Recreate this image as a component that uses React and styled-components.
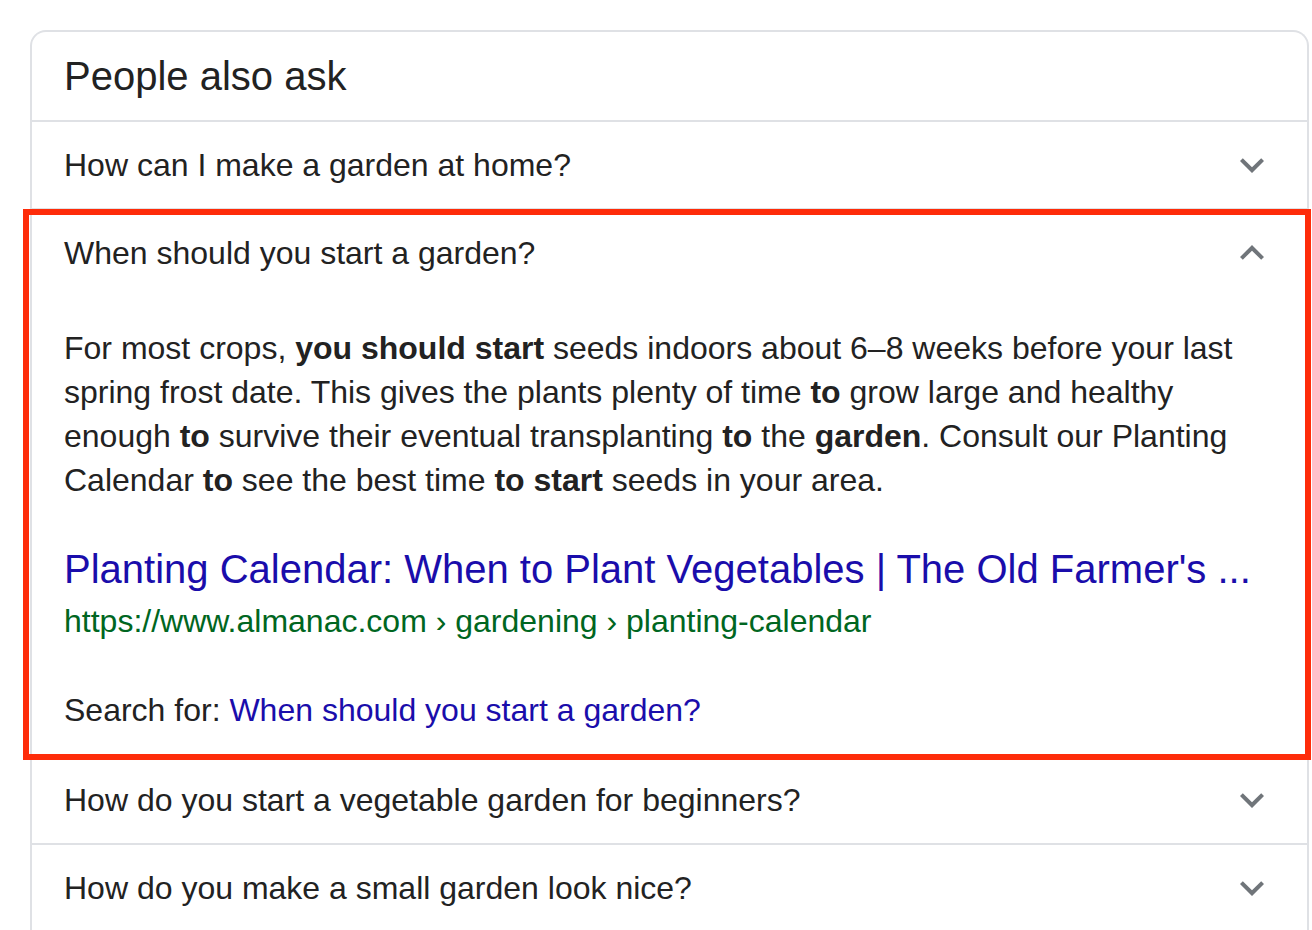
import React from "react";
import styled, { createGlobalStyle, css } from "styled-components";

const Global = createGlobalStyle`
  html, body { margin: 0; padding: 0; background: #fff; }
  body { font-family: "Liberation Sans", Arial, sans-serif; color: #222; }
`;

const Page = styled.div`
  padding: 30px 0 0 30px;
`;

const Card = styled.div`
  width: 1279px;
  box-sizing: border-box;
  border: 2px solid #dfe1e5;
  border-bottom: none;
  border-radius: 16px 16px 0 0;
  background: #fff;
`;

const Heading = styled.div`
  padding: 20px 32px 20px;
  font-size: 40px;
  line-height: 48px;
  color: #222;
`;

const Item = styled.div`
  position: relative;
  border-top: 2px solid #dfe1e5;
  ${(p) =>
    p.$highlight &&
    css`
      &::after {
        content: "";
        position: absolute;
        top: -1px;
        left: -9px;
        right: -4px;
        bottom: -5px;
        border: 6px solid #fe2c0a;
        pointer-events: none;
        z-index: 1;
      }
    `}
`;

const Question = styled.div`
  display: flex;
  align-items: center;
  justify-content: space-between;
  min-height: 86px;
  padding: 0 31px 0 32px;
  font-size: 32px;
  line-height: 40px;
  color: #222;
`;

const Chevron = styled.svg`
  width: 48px;
  height: 48px;
  fill: #70757a;
  flex: none;
`;

const Answer = styled.div`
  padding: 30px 32px 23px 32px;
`;

const Para = styled.p`
  margin: 0;
  font-size: 32px;
  line-height: 44px;
  color: #222;
  max-width: 1190px;
  b { font-weight: bold; }
`;

const ResultLink = styled.a`
  display: block;
  margin-top: 41px;
  font-size: 40px;
  line-height: 52px;
  color: #1a0dab;
  text-decoration: none;
  white-space: nowrap;
`;

const Url = styled.div`
  margin-top: 4px;
  font-size: 32px;
  line-height: 44px;
  color: #006621;
`;

const SearchFor = styled.div`
  margin-top: 45px;
  font-size: 32px;
  line-height: 44px;
  color: #222;
  a { color: #1a0dab; text-decoration: none; }
`;

const ExpandMore = () => (
  <Chevron viewBox="0 0 24 24">
    <path d="M16.59 8.59L12 13.17 7.41 8.59 6 10l6 6 6-6z" />
  </Chevron>
);

const ExpandLess = () => (
  <Chevron viewBox="0 0 24 24">
    <path d="M12 8l-6 6 1.41 1.41L12 10.83l4.59 4.58L18 14z" />
  </Chevron>
);

export default function App() {
  return (
    <>
      <Global />
      <Page>
        <Card>
          <Heading>People also ask</Heading>
          <Item>
            <Question>
              <span>How can I make a garden at home?</span>
              <ExpandMore />
            </Question>
          </Item>
          <Item $highlight>
            <Question>
              <span>When should you start a garden?</span>
              <ExpandLess />
            </Question>
            <Answer>
              <Para>
                For most crops, <b>you should start</b> seeds indoors about 6–8 weeks before your last
                spring frost date. This gives the plants plenty of time <b>to</b> grow large and healthy
                enough <b>to</b> survive their eventual transplanting <b>to</b> the <b>garden</b>. Consult
                our Planting Calendar <b>to</b> see the best time <b>to start</b> seeds in your area.
              </Para>
              <ResultLink href="#">
                Planting Calendar: When to Plant Vegetables | The Old Farmer's ...
              </ResultLink>
              <Url>https://www.almanac.com › gardening › planting-calendar</Url>
              <SearchFor>
                Search for: <a href="#">When should you start a garden?</a>
              </SearchFor>
            </Answer>
          </Item>
          <Item>
            <Question>
              <span>How do you start a vegetable garden for beginners?</span>
              <ExpandMore />
            </Question>
          </Item>
          <Item>
            <Question>
              <span>How do you make a small garden look nice?</span>
              <ExpandMore />
            </Question>
          </Item>
        </Card>
      </Page>
    </>
  );
}
